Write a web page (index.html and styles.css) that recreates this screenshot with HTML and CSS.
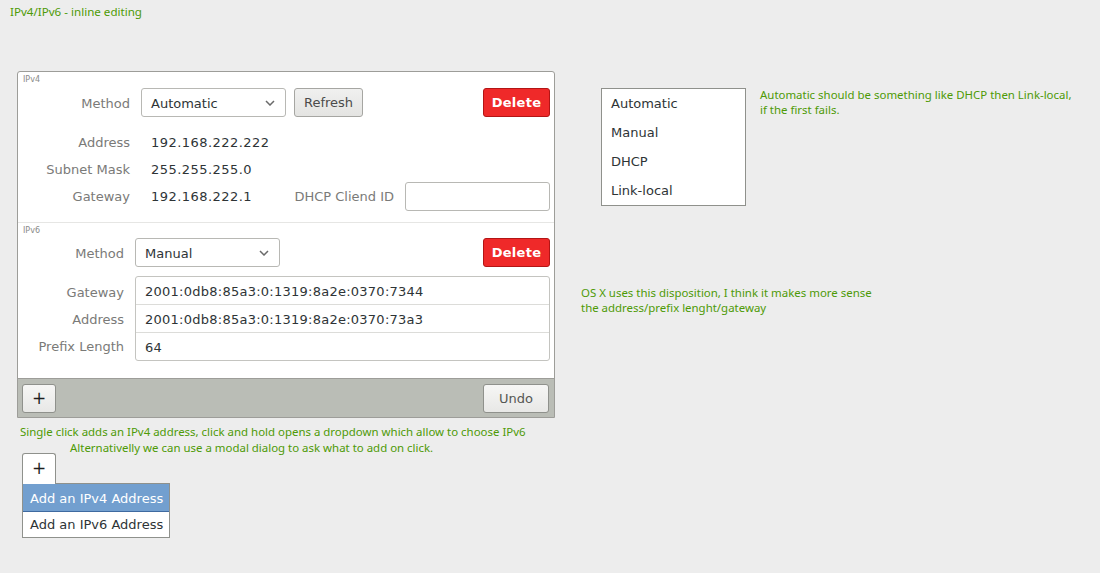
FILE: index.html
```html
<!DOCTYPE html>
<html>
<head>
<meta charset="utf-8">
<link rel="stylesheet" href="styles.css">
</head>
<body>
<div class="title">IPv4/IPv6 - inline editing</div>
<div class="layout">
  <div class="left">
    <div class="panel">
      <div class="sec sec4">
        <div class="sec-label">IPv4</div>
        <div class="row top">
          <div class="lbl">Method</div>
          <div class="combo"><span>Automatic</span><svg width="10" height="6" viewBox="0 0 10 6"><path d="M1 1 L5 5 L9 1" fill="none" stroke="#6a6a6a" stroke-width="1.5"/></svg></div>
          <button class="btn refresh">Refresh</button>
          <div class="spacer"></div>
          <button class="btn delete">Delete</button>
        </div>
        <div class="row info">
          <div class="lbl">Address</div>
          <div class="val">192.168.222.222</div>
        </div>
        <div class="row info">
          <div class="lbl">Subnet Mask</div>
          <div class="val">255.255.255.0</div>
        </div>
        <div class="row info">
          <div class="lbl">Gateway</div>
          <div class="val">192.168.222.1</div>
          <div class="spacer"></div>
          <div class="lbl2">DHCP Cliend ID</div>
          <div class="entry"></div>
        </div>
      </div>
      <div class="sec sec6">
        <div class="sec-label">IPv6</div>
        <div class="row top">
          <div class="lbl">Method</div>
          <div class="combo"><span>Manual</span><svg width="10" height="6" viewBox="0 0 10 6"><path d="M1 1 L5 5 L9 1" fill="none" stroke="#6a6a6a" stroke-width="1.5"/></svg></div>
          <div class="spacer"></div>
          <button class="btn delete">Delete</button>
        </div>
        <div class="group-wrap">
          <div class="glabels">
            <div class="glbl">Gateway</div>
            <div class="glbl">Address</div>
            <div class="glbl">Prefix Length</div>
          </div>
          <div class="group">
            <div class="gitem">2001:0db8:85a3:0:1319:8a2e:0370:7344</div>
            <div class="gitem">2001:0db8:85a3:0:1319:8a2e:0370:73a3</div>
            <div class="gitem">64</div>
          </div>
        </div>
      </div>
      <div class="toolbar">
        <button class="btn tool plus">+</button>
        <div class="spacer"></div>
        <button class="btn tool undo">Undo</button>
      </div>
    </div>
    <p class="note n1">Single click adds an IPv4 address, click and hold opens a dropdown which allow to choose IPv6</p>
    <p class="note n2">Alternativelly we can use a modal dialog to ask what to add on click.</p>
    <div class="addmenu">
      <div class="tab">+</div>
      <div class="menu">
        <div class="mitem sel">Add an IPv4 Address</div>
        <div class="mitem">Add an IPv6 Address</div>
      </div>
    </div>
  </div>
  <div class="mid">
    <div class="midrow">
      <div class="list">
        <div class="litem">Automatic</div>
        <div class="litem">Manual</div>
        <div class="litem">DHCP</div>
        <div class="litem">Link-local</div>
      </div>
      <p class="note auto">Automatic should be something like DHCP then Link-local,<br>if the first fails.</p>
    </div>
    <p class="note osx">OS X uses this disposition, I think it makes more sense<br>the address/prefix lenght/gateway</p>
  </div>
</div>
</body>
</html>
```

FILE: styles.css
```css
html, body {
  margin: 0;
  padding: 0;
}
body {
  background: #ededed;
  width: 1100px;
  height: 573px;
  overflow: hidden;
  font-family: "DejaVu Sans", sans-serif;
  font-size: 13px;
  color: #2e3436;
}
.title {
  font-family: "Noto Sans", sans-serif;
  font-size: 11.6px;
  line-height: 14px;
  color: #4e9a06;
  padding: 5px 0 0 10px;
}
.layout {
  display: flex;
  margin-top: 52px;
}
.left {
  margin-left: 17px;
  width: 539px;
}
.panel {
  background: #ffffff;
  border: 1px solid #9d9d99;
  border-radius: 3px 3px 0 0;
  width: 536px;
}
.sec {
  padding: 0 4px 0 0;
}
.sec4 {
  border-bottom: 1px solid #e6e6e4;
  padding-bottom: 12px;
}
.sec6 {
  padding-bottom: 17px;
}
.sec-label {
  font-size: 8px;
  line-height: 10px;
  color: #8a8a88;
  padding: 3px 0 0 5px;
  height: 13px;
}
.sec6 .sec-label {
  height: 12px;
}
.row {
  display: flex;
  align-items: center;
}
.row.top {
  height: 29px;
}
.row.top .lbl {
  padding-top: 2px;
}
.sec4 .row.info {
  height: 27px;
}
.sec4 .row.top {
  margin-bottom: 12px;
}
.lbl {
  width: 112px;
  text-align: right;
  color: #7a7a78;
  margin-right: 11px;
  flex: none;
}
.sec6 .lbl {
  width: 106px;
}
.val {
  padding-left: 10px;
  color: #2e3436;
  letter-spacing: 0.45px;
}
.spacer {
  flex: 1;
}
.combo {
  box-sizing: border-box;
  width: 145px;
  height: 29px;
  border: 1px solid #b8b8b4;
  border-radius: 3px;
  background: #fff;
  display: flex;
  align-items: center;
  justify-content: space-between;
  padding: 2px 10px 0 9px;
}
.combo svg {
  display: block;
  margin-top: -2px;
}
.btn {
  font-family: "DejaVu Sans", sans-serif;
  font-size: 13px;
  box-sizing: border-box;
  height: 29px;
  border-radius: 3px;
  padding: 0;
  margin: 0;
}
.refresh {
  width: 69px;
  margin-left: 8px;
  background: linear-gradient(#f0f0ef, #e4e4e2);
  border: 1px solid #a6a6a2;
  color: #4b4b4b;
}
.delete {
  width: 67px;
  background: #ef2929;
  border: 1px solid #b31515;
  color: #ffffff;
  font-weight: bold;
  letter-spacing: 0.3px;
}
.lbl2 {
  color: #7a7a78;
  margin-right: 11px;
}
.entry {
  box-sizing: border-box;
  width: 145px;
  height: 29px;
  border: 1px solid #b8b8b4;
  border-radius: 3px;
  background: #fff;
}
.group-wrap {
  display: flex;
  margin-top: 9px;
}
.glabels {
  width: 106px;
  margin-right: 11px;
  flex: none;
  padding-top: 3px;
}
.glbl {
  height: 27px;
  line-height: 27px;
  text-align: right;
  color: #7a7a78;
}
.group {
  flex: 1;
  border: 1px solid #c4c4c0;
  border-radius: 3px;
}
.gitem {
  height: 27px;
  line-height: 29px;
  padding-left: 9px;
  border-top: 1px solid #dcdcd9;
  letter-spacing: 0.25px;
}
.gitem:first-child {
  border-top: none;
}
.toolbar {
  display: flex;
  align-items: center;
  background: #babdb6;
  border-top: 1px solid #9d9d99;
  height: 38px;
  padding: 0 5px 0 4px;
}
.tool {
  background: linear-gradient(#f6f6f5, #e8e8e6);
  border: 1px solid #8f918c;
  height: 29px;
}
.plus {
  width: 34px;
  font-size: 17px;
  color: #1e1e1e;
  line-height: 1;
}
.undo {
  width: 66px;
  color: #555753;
}
.note {
  font-family: "Noto Sans", sans-serif;
  font-size: 11.45px;
  line-height: 15px;
  color: #4e9a06;
  margin: 0;
}
.n1 {
  margin-top: 6px;
  padding-left: 3px;
}
.n2 {
  padding-left: 53px;
  margin-top: 1px;
}
.addmenu {
  margin-left: 5px;
  margin-top: -2px;
}
.tab {
  box-sizing: border-box;
  width: 34px;
  height: 31px;
  background: #fff;
  border: 1px solid #8f918c;
  border-bottom: none;
  border-radius: 3px 3px 0 0;
  text-align: center;
  font-size: 17px;
  line-height: 29px;
  color: #1e1e1e;
  position: relative;
  z-index: 1;
  margin-bottom: -1px;
}
.menu {
  width: 146px;
  background: #fff;
  border: 1px solid #8f918c;
}
.mitem {
  height: 25px;
  line-height: 25px;
  padding-left: 7px;
  color: #2e3436;
}
.mitem.sel {
  background: #729fcf;
  color: #ffffff;
  border-bottom: 1px solid #3f6aa0;
  height: 27px;
  line-height: 29px;
}
.mid {
  margin-left: 25px;
}
.midrow {
  display: flex;
  align-items: flex-start;
}
.list {
  margin-left: 20px;
  margin-top: 17px;
  width: 143px;
  background: #fff;
  border: 1px solid #8f918c;
  padding: 0;
}
.litem {
  height: 29px;
  line-height: 29px;
  padding-left: 9px;
  color: #2e3436;
}
.note.auto {
  margin-left: 14px;
  margin-top: 16px;
}
.note.osx {
  margin-top: 79px;
}
```
